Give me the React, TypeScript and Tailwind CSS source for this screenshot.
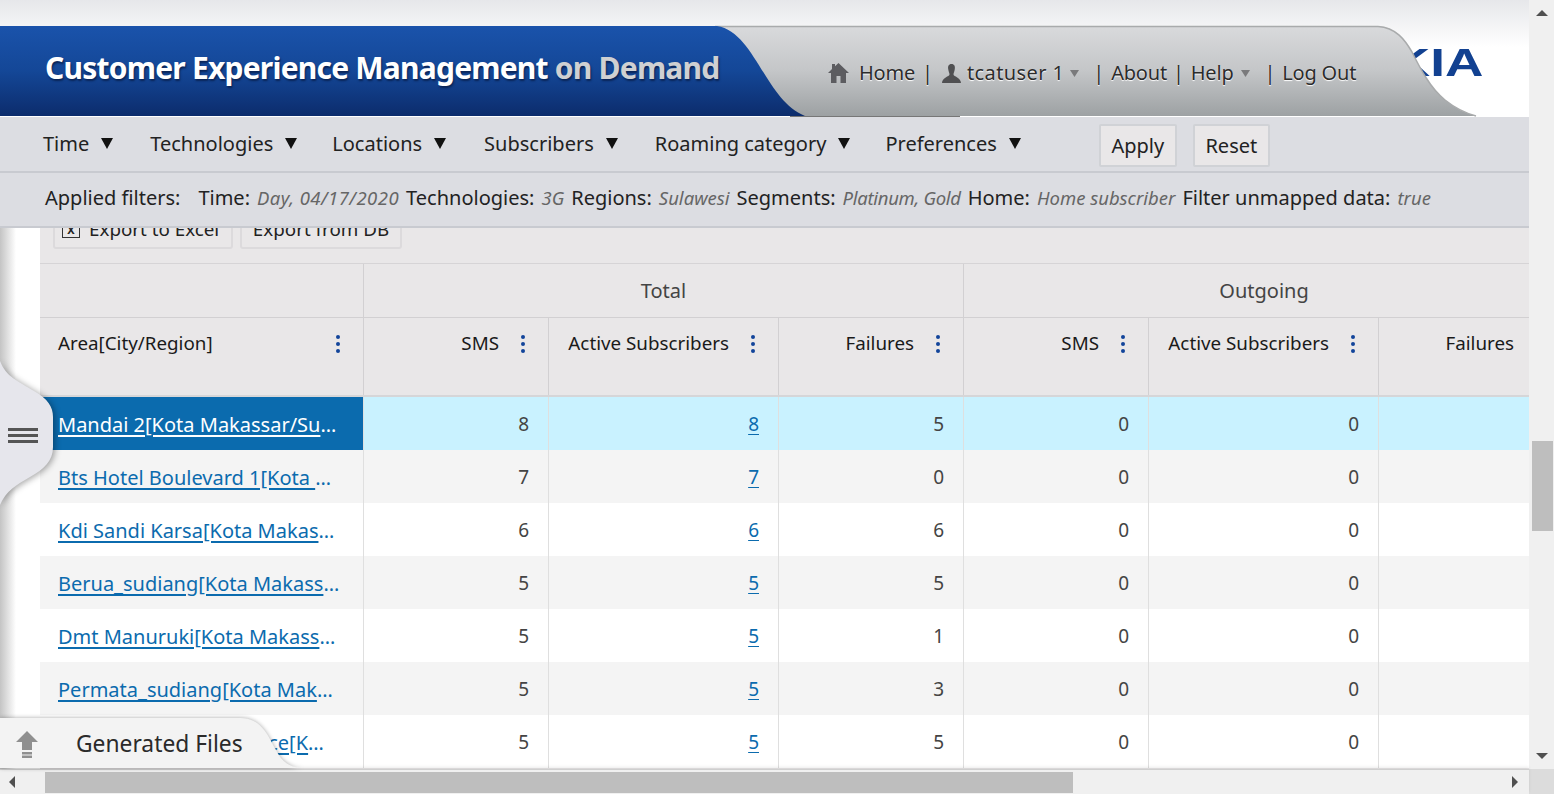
import React from "react";

const font = { fontFamily: '"Noto Sans", "Open Sans", sans-serif' };

function Dots() {
  return (
    <span className="flex flex-col items-center gap-[3px] w-[6px] shrink-0">
      <span className="w-[4px] h-[4px] rounded-full bg-[#12449a]" />
      <span className="w-[4px] h-[4px] rounded-full bg-[#12449a]" />
      <span className="w-[4px] h-[4px] rounded-full bg-[#12449a]" />
    </span>
  );
}

const cols = "grid grid-cols-[324px_185px_230px_185px_185px_230px_185px]";

function NavItem({ label, gap }: { label: string; gap: string }) {
  return (
    <div className={"flex items-center " + gap}>
      <span className="text-[20px] text-[#222]">{label}</span>
      <svg width="12" height="11" viewBox="0 0 12 11" className="ml-[12px] mb-[2px]"><path d="M0 0 H12 L6 11 Z" fill="#111" /></svg>
    </div>
  );
}

function Filter({ k, v, cls = "" }: { k: string; v: string; cls?: string }) {
  return (
    <span className="flex items-baseline gap-[7px]">
      <span className="text-[20px] text-[#222]">{k}</span>
      <span className={"text-[18.500px] italic text-[#666] " + cls}>{v}</span>
    </span>
  );
}

function HeadCell({ label, left }: { label: string; left?: boolean }) {
  return (
    <div className={"flex items-start pt-[13px] h-[77px] pr-[22px] border-r border-[#d2d0d2] " + (left ? "pl-[18px] justify-between" : "justify-end gap-[21px]")}>
      <span className="text-[18.800px] leading-[24px] text-[#1a1a1a]">{label}</span>
      <span className="pt-[4px]"><Dots /></span>
    </div>
  );
}

const rows = [
  ["Mandai 2[Kota Makassar/Sulawesi]", "8", "8", "5"],
  ["Bts Hotel Boulevard 1[Kota Makassar/Sulawesi]", "7", "7", "0"],
  ["Kdi Sandi Karsa[Kota Makassar/Sulawesi]", "6", "6", "6"],
  ["Berua_sudiang[Kota Makassar/Sulawesi]", "5", "5", "5"],
  ["Dmt Manuruki[Kota Makassar/Sulawesi]", "5", "5", "1"],
  ["Permata_sudiang[Kota Makassar/Sulawesi]", "5", "5", "3"],
  ["Sudiang Raya_Residence[Kota Makassar/Sulawesi]", "5", "5", "5"],
];

function Num({ v, border = true }: { v: string; border?: boolean }) {
  return (
    <div className={"flex items-center justify-end pt-[2px] pr-[19px] text-[19px] text-[#444] " + (border ? "border-r border-[#dfdfdf]" : "")}>{v}</div>
  );
}

function MiniCaret({ cls }: { cls: string }) {
  return (
    <svg width="9" height="7" viewBox="0 0 9 7" className={cls}><path d="M0 0 H9 L4.500 7 Z" fill="#7a7a7c" /></svg>
  );
}

export default function App() {
  return (
    <div style={font} className="relative flex w-[1554px] h-[794px] overflow-hidden bg-white">
      <div className="flex flex-col w-[1529px] shrink-0">
        {/* Header */}
        <header className="relative h-[117px] shrink-0 bg-gradient-to-b from-[#e6e7ea] via-white via-40% to-white">
          <span className="absolute right-[46px] top-[35px] text-[38px] leading-[56px] font-bold text-[#124191] scale-x-[1.4] origin-right" style={{ fontFamily: '"Liberation Sans", sans-serif' }}>NOKIA</span>
          <svg className="absolute left-0 top-0" width="1529" height="117" viewBox="0 0 1529 117">
            <defs>
              <linearGradient id="g" x1="0" y1="0" x2="0" y2="1">
                <stop offset="0" stopColor="#d9dadc" />
                <stop offset="0.5" stopColor="#c4c6c8" />
                <stop offset="1" stopColor="#9da1a3" />
              </linearGradient>
              <linearGradient id="b" x1="0" y1="0" x2="0" y2="1">
                <stop offset="0" stopColor="#1a53ab" />
                <stop offset="0.5" stopColor="#144797" />
                <stop offset="1" stopColor="#0c2c6c" />
              </linearGradient>
            </defs>
            <path d="M700 26 L1378 26 C1396 27 1405 40 1412 52 C1420 68 1430 88 1445 100 C1455 108 1465 113 1476 116 L700 116 Z" fill="url(#g)" />
            <path d="M715 26.500 L1378 26.500 C1396 27.500 1405 40 1412 52 C1420 68 1430 88 1445 100 C1455 108 1465 113 1476 116" fill="none" stroke="#a9abac" strokeWidth="1.500" />
            <path d="M0 26 L717 26 C755 32 765 100 805 116 L0 116 Z" fill="url(#b)" />
            <path d="M790 116.500 L960 116.500" stroke="#777" strokeWidth="1" />
          </svg>
          <div className="relative flex items-start justify-between h-full">
            <h1 className="pl-[45px] pt-[46px] text-[30px] leading-[44px] font-bold text-white tracking-[-0.78px] [text-shadow:1px_2px_2px_#0a2456]">
              Customer Experience Management <span className="text-[#cfd0d2]">on Demand</span>
            </h1>
            <nav className="absolute left-[828px] top-[57px] flex items-center h-[32px] text-[20px] text-[#2c2c2c] tracking-[-0.2px] [text-shadow:0_1px_1px_#fff]">
              <svg width="21" height="20" viewBox="0 0 21 20" className="mr-[10px]"><path d="M10.500 0 L21 10 H18 V20 H12.500 V13 H8.500 V20 H3 V10 H0 L4 6 V1 H7 V3.200 Z" fill="#5c5c60" /></svg>
              <span>Home</span>
              <span className="ml-[7px] mr-[9px]">|</span>
              <svg width="19" height="19" viewBox="0 0 19 19" className="mr-[6px]"><path d="M9.500 0 C12.500 0 13.200 2.500 12.800 5 C12.500 7.500 11.500 9 11.500 10.500 C11.500 12.500 19 13.500 19 19 H0 C0 13.500 7.500 12.500 7.500 10.500 C7.500 9 6.500 7.500 6.200 5 C5.800 2.500 6.500 0 9.500 0 Z" fill="#505052" /></svg>
              <span className="tracking-[0.4px]">tcatuser 1</span>
              <MiniCaret cls="ml-[6px] mr-[14px]" />
              <span className="mr-[7px]">|</span>
              <span>About</span>
              <span className="ml-[6px] mr-[7px]">|</span>
              <span>Help</span>
              <MiniCaret cls="ml-[7px] mr-[15px]" />
              <span className="mr-[7px]">|</span>
              <span>Log Out</span>
            </nav>
          </div>
        </header>

        {/* Menu */}
        <div className="flex items-center h-[56px] shrink-0 pl-[43px] bg-[#dcdde2] border-b-2 border-[#c8cad0]">
          <NavItem label="Time" gap="mr-[37px]" />
          <NavItem label="Technologies" gap="mr-[35px]" />
          <NavItem label="Locations" gap="mr-[38px]" />
          <NavItem label="Subscribers" gap="mr-[37px]" />
          <NavItem label="Roaming category" gap="mr-[35px]" />
          <NavItem label="Preferences" gap="mr-[78px]" />
          <button className="h-[43px] w-[78px] mt-[3px] text-[20px] text-[#222] bg-[#e9e7e8] border-2 border-[#d0d2d6] rounded-[2px]">Apply</button>
          <button className="h-[43px] w-[77px] mt-[3px] ml-[16px] text-[20px] text-[#222] bg-[#e9e7e8] border-2 border-[#d0d2d6] rounded-[2px]">Reset</button>
        </div>

        {/* Applied filters */}
        <div className="relative z-10 flex items-center h-[55px] shrink-0 pl-[45px] pb-[3px] gap-[7px] bg-[#dcdde2] border-b-2 border-[#c8cad0]">
          <span className="text-[20px] text-[#222] mr-[11px]">Applied filters:</span>
          <Filter k="Time:" v="Day, 04/17/2020" cls="tracking-[0.47px]" />
          <Filter k="Technologies:" v="3G" />
          <Filter k="Regions:" v="Sulawesi" />
          <Filter k="Segments:" v="Platinum, Gold" cls="tracking-[-0.3px]" />
          <Filter k="Home:" v="Home subscriber" />
          <Filter k="Filter unmapped data:" v="true" />
        </div>

        {/* Body */}
        <div className="flex flex-1 min-h-0">
          <div className="w-[40px] shrink-0 bg-gradient-to-r from-[#c4c4c4] via-white via-40% to-white" />
          <div className="flex-1 min-w-0 overflow-hidden bg-[#e9e7e8]">
            <div className="flex h-[36px] gap-[7px] pl-[13px] items-end border-b border-[#d6d4d6] pb-[14px] overflow-hidden">
              <div className="flex items-center gap-[9px] h-[42px] pt-[2px] w-[180px] shrink-0 pl-[7px] border-2 border-[#dcdadc] rounded-[3px] text-[18.800px] text-[#222]">
                <span className="flex items-center justify-center w-[18px] h-[17px] border border-[#333] text-[11px] font-bold leading-none">X</span>
                Export to Excel
              </div>
              <div className="flex items-center justify-center h-[42px] pt-[2px] w-[162px] shrink-0 border-2 border-[#dcdadc] rounded-[3px] text-[18.800px] text-[#222]">Export from DB</div>
            </div>

            <div className="w-[1524px]">
              <div className={cols + " h-[54px] border-b border-[#d2d0d2]"}>
                <div className="border-r border-[#d2d0d2]" />
                <div className="col-span-3 flex items-center justify-center border-r border-[#d2d0d2] text-[20px] text-[#444]">Total</div>
                <div className="col-span-3 flex items-center justify-center text-[20px] text-[#444]">Outgoing</div>
              </div>
              <div className={cols + " border-b-2 border-[#d6d6d8]"}>
                <HeadCell left label="Area[City/Region]" />
                <HeadCell label="SMS" />
                <HeadCell label="Active Subscribers" />
                <HeadCell label="Failures" />
                <HeadCell label="SMS" />
                <HeadCell label="Active Subscribers" />
                <HeadCell label="Failures" />
              </div>
              {rows.map((r, i) => {
                const sel = i === 0;
                const bg = sel ? "bg-[#c9f2ff]" : i % 2 === 1 ? "bg-[#f4f4f4]" : "bg-white";
                return (
                  <div key={i} className={cols + " h-[53px] " + bg}>
                    <div className={"flex items-center pt-[2px] pl-[18px] min-w-0 border-r border-[#dfdfdf] " + (i === 6 ? "pr-[32px] " : "pr-[23px] ") + (sel ? "bg-[#0b6bae] text-white" : "text-[#0b6bae]")}>
                      <div className="truncate text-[20px]"><span className="underline underline-offset-[3px]">{r[0]}</span></div>
                    </div>
                    <Num v={r[1]} />
                    <div className="flex items-center justify-end pt-[2px] pr-[19px] border-r border-[#dfdfdf] text-[19px] text-[#0b6bae]"><span className="underline underline-offset-[3px]">{r[2]}</span></div>
                    <Num v={r[3]} />
                    <Num v="0" />
                    <Num v="0" />
                    <Num v="0" border={false} />
                  </div>
                );
              })}
            </div>
          </div>
        </div>

        {/* Horizontal scrollbar */}
        <div className="relative z-20 flex items-center h-[25px] shrink-0 bg-[#f0f0f0] border-t border-[#cfcfcf] shadow-[0_-2px_3px_rgba(0,0,0,0.08)]">
          <svg width="7" height="12" viewBox="0 0 7 12" className="ml-[9px]"><path d="M6 0 V12 L0 6 Z" fill="#505050" /></svg>
          <div className="ml-[29px] w-[1028px] h-[21px] bg-[#bebebe]" />
          <svg width="7" height="12" viewBox="0 0 7 12" className="ml-[439px]"><path d="M0 0 V12 L6 6 Z" fill="#505050" /></svg>
        </div>
      </div>

      {/* Vertical scrollbar */}
      <div className="flex flex-col items-center w-[25px] shrink-0 bg-[#f0f0f0]">
        <svg width="12" height="6" viewBox="0 0 12 6" className="mt-[10px]"><path d="M6 0 L12 6 H0 Z" fill="#505050" /></svg>
        <div className="mt-[425px] w-[21px] h-[90px] ml-[1px] bg-[#bebebe]" />
        <svg width="12" height="6" viewBox="0 0 12 6" className="mt-[222px]"><path d="M0 0 H12 L6 6 Z" fill="#505050" /></svg>
        <div className="mt-auto w-[25px] h-[25px] bg-[#dcdcdc]" />
      </div>

      {/* Sidebar handle */}
      <div className="absolute left-0 top-[355px] w-[60px] h-[160px]">
        <svg width="60" height="160" viewBox="0 0 60 160" className="absolute inset-0 drop-shadow-[2px_1px_3px_rgba(0,0,0,0.35)]">
          <path d="M0 6 C6 22 18 26 34 36 C48 44 53 52 53 62 L53 92 C53 106 44 114 30 122 C16 130 6 136 0 150 Z" fill="#e6e6ec" />
        </svg>
        <div className="absolute left-[8px] top-[73px] flex flex-col gap-[3px]">
          <span className="block w-[30px] h-[3px] bg-[#555]" />
          <span className="block w-[30px] h-[3px] bg-[#555]" />
          <span className="block w-[30px] h-[3px] bg-[#555]" />
        </div>
      </div>

      {/* Generated files */}
      <div className="absolute left-0 top-[714px] w-[310px] h-[56px] z-30">
        <svg width="310" height="56" viewBox="0 0 310 56" className="absolute inset-0 drop-shadow-[0_0_2px_rgba(0,0,0,0.35)]">
          <path d="M0 4 L240 4 C262 4 268 22 276 36 C282 48 290 54 304 54 L0 54 Z" fill="#f3f3f3" />
        </svg>
        <svg width="22" height="27" viewBox="0 0 22 27" className="absolute left-[16px] top-[17px]">
          <path d="M11 0 L22 11 H16 V19 H6 V11 H0 Z" fill="#8f8f8f" />
          <rect x="6" y="21" width="10" height="2.500" fill="#8f8f8f" />
          <rect x="6" y="24.500" width="10" height="2.500" fill="#8f8f8f" />
        </svg>
        <span className="absolute left-[76px] top-[13px] text-[22.800px] leading-[34px] text-[#2a2a2a]">Generated Files</span>
      </div>
    </div>
  );
}
